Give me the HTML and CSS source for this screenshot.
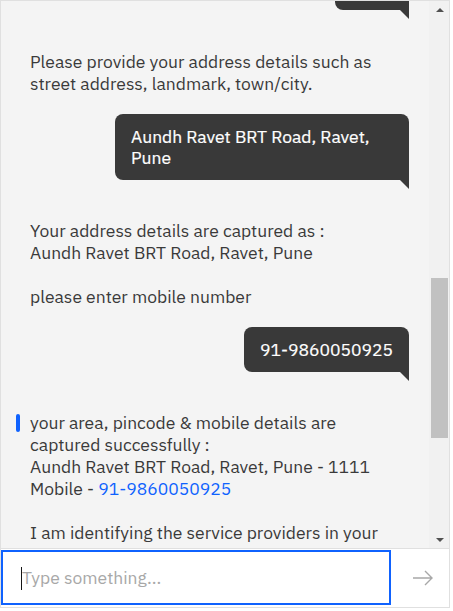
FILE: index.html
```html
<!DOCTYPE html>
<html lang="en">
<head>
<meta charset="utf-8">
<title>Chat</title>
<link rel="stylesheet" href="styles.css">
</head>
<body>
<div class="widget">
  <div class="main">
    <div class="messages">
      <div class="list">
        <div class="user first"><div class="bubble num">1111</div></div>
        <div class="bot"><span class="indicator"></span><p class="text">Please provide your address details such as street address, landmark, town/city.</p></div>
        <div class="user"><div class="bubble">Aundh Ravet BRT Road, Ravet, Pune</div></div>
        <div class="bot"><span class="indicator"></span><p class="text">Your address details are captured as :<br>Aundh Ravet BRT Road, Ravet, Pune<br><br>please enter mobile number</p></div>
        <div class="user"><div class="bubble num">91-9860050925</div></div>
        <div class="bot last"><span class="indicator on"></span><p class="text">your area, pincode &amp; mobile details are captured successfully :<br>Aundh Ravet BRT Road, Ravet, Pune - 1111<br>Mobile - <a class="link num" href="#">91-9860050925</a><br><br>I am identifying the service providers in your area, please wait.</p></div>
      </div>
    </div>
    <div class="scrollbar">
      <div class="sb-btn"><span class="tri up"></span></div>
      <div class="sb-track"><div class="sb-thumb"></div></div>
      <div class="sb-btn"><span class="tri down"></span></div>
    </div>
  </div>
  <div class="composer">
    <div class="field">
      <span class="caret"></span>
      <input class="input" type="text" placeholder="Type something...">
    </div>
    <button class="send" type="button" aria-label="Send">
      <svg width="22" height="16" viewBox="0 0 22 16"><path d="M1 8H20M13 1L20 8L13 15" fill="none" stroke="#a8a8a8" stroke-width="1.4"/></svg>
    </button>
  </div>
</div>
</body>
</html>
```
FILE: styles.css
```css
* { box-sizing: border-box; }
html, body { margin: 0; padding: 0; background: #ffffff; }
body { font-family: "IBM Plex Sans", "Liberation Sans", Arial, sans-serif; }

.widget {
  width: 450px;
  height: 608px;
  border: 1px solid #e0e0e0;
  display: flex;
  flex-direction: column;
  background: #ffffff;
}

.main {
  flex: 1;
  min-height: 0;
  display: flex;
  border-bottom: 1px solid #e0e0e0;
}

.messages {
  flex: 1;
  overflow: hidden;
  background: #f4f4f4;
}

.list {
  margin-top: -36px;
  display: flex;
  flex-direction: column;
}

.user {
  display: flex;
  justify-content: flex-end;
  padding-right: 20px;
  margin-bottom: 40px;
}
.user.first { margin-bottom: 41px; }

.bubble {
  position: relative;
  max-width: 294px;
  background: #393939;
  color: #ffffff;
  font-size: 17.5px;
  line-height: 21px;
  padding: 12px 16px;
  border-radius: 8px 8px 0 8px;
  -webkit-text-stroke: 0.2px #ffffff;
}
.bubble::after {
  content: "";
  position: absolute;
  right: 0;
  bottom: -9px;
  width: 9px;
  height: 9px;
  background: #393939;
  clip-path: polygon(0 0, 100% 0, 100% 100%);
}

.num { letter-spacing: 0; }

.bot {
  display: flex;
  align-items: flex-start;
  padding-left: 15px;
  padding-right: 34px;
  margin-bottom: 20px;
}
.bot + .user { margin-top: -1px; }

.indicator {
  flex: none;
  width: 4px;
  height: 18px;
  margin-top: 2px;
  margin-right: 10px;
  border-radius: 2px;
  background: transparent;
}
.indicator.on { background: #0f62fe; }

.text {
  margin: 0;
  font-size: 17.5px;
  line-height: 22px;
  color: #3a3a3a;
}

.link { color: #0f62fe; text-decoration: none; }

.scrollbar {
  width: 20px;
  background: #f1f1f1;
  display: flex;
  flex-direction: column;
}
.sb-btn {
  height: 17px;
  display: flex;
  align-items: center;
  justify-content: center;
  padding-left: 2px;
}
.sb-track { flex: 1; padding: 0 1px 0 2px; }
.sb-thumb {
  margin-top: 260px;
  height: 160px;
  background: #c1c1c1;
}
.tri { width: 0; height: 0; border-left: 4px solid transparent; border-right: 4px solid transparent; }
.tri.up { border-bottom: 4px solid #505050; }
.tri.down { border-top: 4px solid #505050; }

.composer {
  height: 58px;
  display: flex;
  align-items: stretch;
  background: #ffffff;
  padding: 1px 0 2px 0;
}

.field {
  width: 390px;
  border: 2px solid #0f62fe;
  display: flex;
  align-items: center;
  padding-left: 18px;
}
.caret {
  width: 1px;
  height: 23px;
  background: #161616;
  margin-top: 2px;
}
.input {
  flex: 1;
  border: none;
  outline: none;
  background: transparent;
  padding: 0;
  margin: 0;
  font-family: inherit;
  font-size: 17.5px;
  color: #161616;
}
.input::placeholder { color: #a8a8a8; }

.send {
  flex: 1;
  border: none;
  background: transparent;
  padding: 0 0 0 6px;
  display: flex;
  align-items: center;
  justify-content: center;
}
.send svg { display: block; }
```
